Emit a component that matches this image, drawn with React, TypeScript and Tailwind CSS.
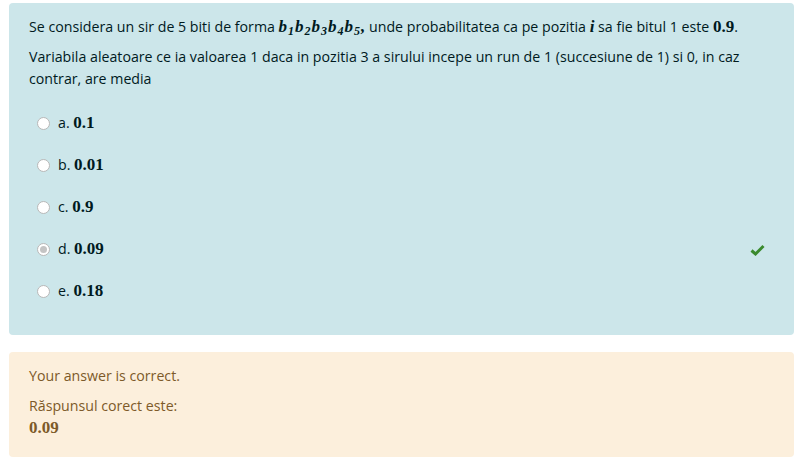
import React from "react";

const sans = { fontFamily: '"Open Sans", "Noto Sans", sans-serif' };

function M({ children }: { children: React.ReactNode }) {
  return (
    <span className="font-bold italic text-[17px] leading-[0]" style={{ fontFamily: '"Liberation Serif", serif' }}>
      {children}
    </span>
  );
}
function N({ children }: { children: React.ReactNode }) {
  return (
    <span className="font-bold text-[17px] leading-[0]" style={{ fontFamily: '"Liberation Serif", serif' }}>
      {children}
    </span>
  );
}
function S({ children }: { children: React.ReactNode }) {
  return <sub className="text-[12px] ml-[1px] mr-[1px]">{children}</sub>;
}

function Radio({ checked }: { checked?: boolean }) {
  return (
    <span className="w-[13px] h-[13px] rounded-full bg-white border border-[#b8b8b8] flex items-center justify-center shrink-0">
      {checked && <span className="w-[7px] h-[7px] rounded-full bg-[#c4c4c4]" />}
    </span>
  );
}

const options = [
  { l: "a.", v: "0.1" },
  { l: "b.", v: "0.01" },
  { l: "c.", v: "0.9" },
  { l: "d.", v: "0.09", checked: true, ok: true },
  { l: "e.", v: "0.18" },
];

export default function App() {
  return (
    <div className="w-[803px] h-[475px] bg-white pt-[3px] px-[9px] text-[14.2px] leading-[24px]" style={sans}>
      <div className="bg-[#cce6ea] rounded-[4px] text-[#001a1e] pl-[20px] pr-[30px] pt-[12px] pb-[32px]">
        <p className="mb-[7px]">
          Se considera un sir de 5 biti de forma{" "}
          <M>
            b<S>1</S>b<S>2</S>b<S>3</S>b<S>4</S>b<S>5</S>,
          </M>{" "}
          unde probabilitatea ca pe pozitia <M>i</M> sa fie bitul 1 este <N>0.9</N>.
        </p>
        <p className="leading-[22px]">
          Variabila aleatoare ce ia valoarea 1 daca in pozitia 3 a sirului incepe un run de 1 (succesiune de 1) si 0, in caz
          contrar, are media
        </p>
        <div className="mt-[21px] flex flex-col gap-[18px]">
          {options.map((o) => (
            <div key={o.l} className="flex items-center h-[24px] pl-[8px]">
              <Radio checked={o.checked} />
              <span className="ml-[8px]">
                {o.l} <N>{o.v}</N>
              </span>
              <span className="flex-1" />
              {o.ok && (
                <svg width="15" height="12" viewBox="0 0 15 12" className="mr-[-1px] mt-[1px]">
                  <path d="M1.5 6.5 L5.5 10 L13.5 2" stroke="#3a8a2e" strokeWidth="3" fill="none" />
                </svg>
              )}
            </div>
          ))}
        </div>
      </div>
      <div className="mt-[17px] bg-[#fcefdc] rounded-[4px] text-[#7d5a29] px-[20px] pt-[12px] pb-[19px]">
        <p className="mb-[6px]">Your answer is correct.</p>
        <p>Răspunsul corect este:</p>
        <p className="leading-[20px]">
          <N>0.09</N>
        </p>
      </div>
    </div>
  );
}
